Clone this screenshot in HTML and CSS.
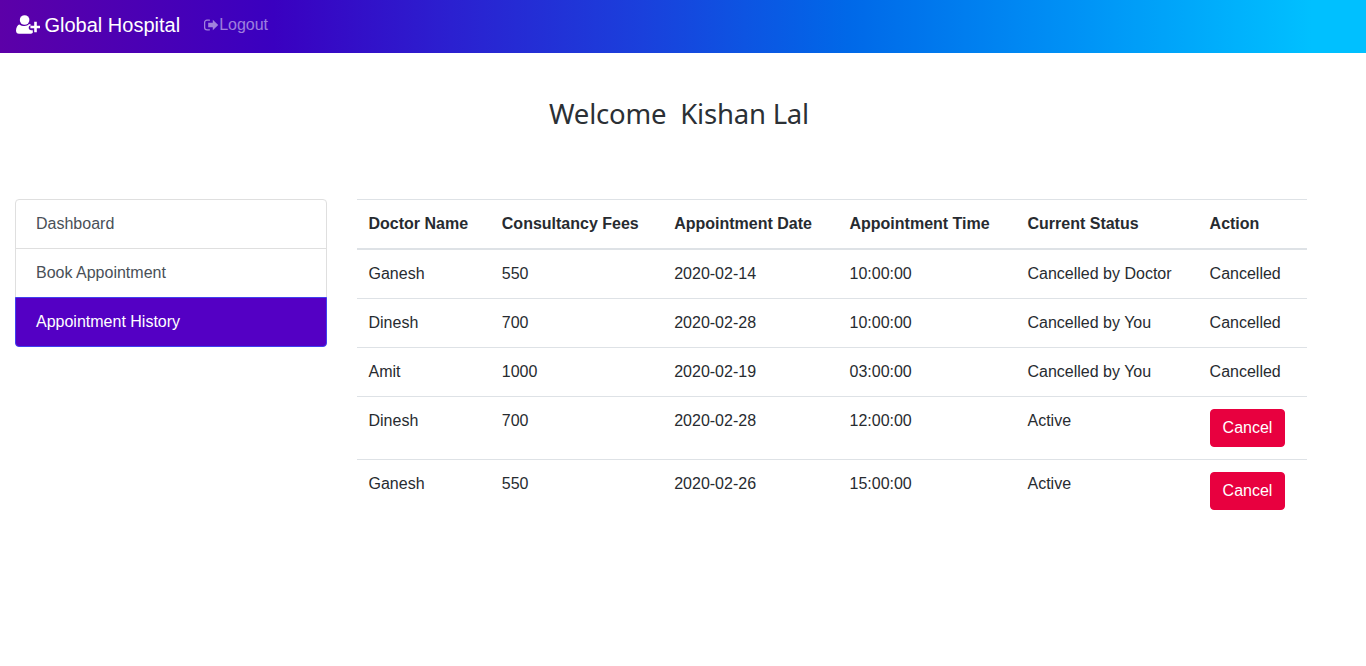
FILE: index.html
```html
<!DOCTYPE html>
<html lang="en">
<head>
<meta charset="utf-8">
<title>Global Hospital</title>
<link rel="stylesheet" href="styles.css">
</head>
<body>
<nav class="navbar">
  <a class="brand" href="#">
    <svg class="brand-icon" viewBox="0 0 24 19" width="24" height="19" aria-hidden="true">
      <circle cx="8.6" cy="5" r="4.8"/>
      <path d="M3.8 9.2C1.4 10 .2 12.2 0 15.4c0 2 1 3.3 3 3.3h11.6c.9 0 1.7-.3 2.2-.9v-2.6h-1.6c-1.5 0-2.5-1-2.5-2.5s1-2.5 2.5-2.5h.4c-.6-.5-1.4-.9-2.4-1.1-1.3 1.3-2.9 2-4.6 2s-4.3-.7-5.8-1.9z"/>
      <path d="M18.2 6.8h2.6v3.9H24.6v2.6h-3.8v3.9h-2.6v-3.9h-3.8v-2.6h3.8z"/>
    </svg>
    Global Hospital
  </a>
  <a class="logout" href="#">
    <svg class="logout-icon" viewBox="0 0 15 12" width="15" height="12" aria-hidden="true">
      <path d="M5.4 1.2H3C1.6 1.2.6 2.2.6 3.6v4.8c0 1.4 1 2.4 2.4 2.4h2.4" fill="none" stroke="currentColor" stroke-width="1.3" stroke-linecap="round"/>
      <path d="M8.8.8l5.4 5.2-5.4 5.2V8.2H4.2V3.8h4.6z"/>
    </svg>Logout
  </a>
</nav>
<main class="page">
  <h3 class="welcome">Welcome &nbsp;Kishan Lal</h3>
  <div class="content">
    <aside class="side">
      <a class="side-item" href="#">Dashboard</a>
      <a class="side-item" href="#">Book Appointment</a>
      <a class="side-item active" href="#">Appointment History</a>
    </aside>
    <table class="table">
      <thead>
        <tr>
          <th class="col-doctor">Doctor Name</th>
          <th class="col-fees">Consultancy Fees</th>
          <th class="col-date">Appointment Date</th>
          <th class="col-time">Appointment Time</th>
          <th class="col-status">Current Status</th>
          <th class="col-action">Action</th>
        </tr>
      </thead>
      <tbody>
        <tr><td>Ganesh</td><td>550</td><td>2020-02-14</td><td>10:00:00</td><td>Cancelled by Doctor</td><td>Cancelled</td></tr>
        <tr><td>Dinesh</td><td>700</td><td>2020-02-28</td><td>10:00:00</td><td>Cancelled by You</td><td>Cancelled</td></tr>
        <tr><td>Amit</td><td>1000</td><td>2020-02-19</td><td>03:00:00</td><td>Cancelled by You</td><td>Cancelled</td></tr>
        <tr><td>Dinesh</td><td>700</td><td>2020-02-28</td><td>12:00:00</td><td>Active</td><td><button class="btn" type="button">Cancel</button></td></tr>
        <tr><td>Ganesh</td><td>550</td><td>2020-02-26</td><td>15:00:00</td><td>Active</td><td><button class="btn" type="button">Cancel</button></td></tr>
      </tbody>
    </table>
  </div>
</main>
</body>
</html>
```
FILE: styles.css
```css
* { box-sizing: border-box; }
html, body { margin: 0; height: 100%; }
body {
  font-family: "Liberation Sans", Arial, sans-serif;
  font-size: 16px;
  line-height: 24px;
  color: #272b30;
  background: #fff;
}
a { text-decoration: none; }
.navbar {
  height: 53px;
  display: flex;
  align-items: center;
  padding: 0 16px 4px;
  background: linear-gradient(to right, #5c00a8 0%, #3a00c0 20%, #2b20d0 33%, #1a40dc 47%, #0068e8 62%, #0090f5 78%, #00c0ff 96%);
}
.brand {
  display: flex;
  align-items: center;
  gap: 5px;
  color: #fff;
  font-size: 20px;
  line-height: 30px;
  margin-right: 24px;
}
.brand-icon { fill: #fff; margin-right: -.5px; }
.logout {
  display: flex;
  align-items: center;
  color: rgba(255, 255, 255, .5);
}
.logout-icon { fill: currentColor; }
.page { padding: 0 15px; }
.welcome {
  margin: 0;
  padding: 42px 8px 0 0;
  height: 146px;
  text-align: center;
  font-family: "Noto Sans", sans-serif;
  font-weight: 400;
  font-size: 27.5px;
  letter-spacing: -.2px;
  line-height: 38px;
  color: #2b3035;
}
.content {
  display: flex;
  align-items: flex-start;
  gap: 30px;
}
.side {
  width: 311.5px;
  flex: none;
  display: flex;
  flex-direction: column;
  border-radius: 4px;
}
.side-item {
  height: 50px;
  margin-top: -1px;
  padding: 12px 20px;
  border: 1px solid #dfdfdf;
  color: #495057;
}
.side-item:first-child { margin-top: 0; border-radius: 4px 4px 0 0; }
.side-item:last-child { border-radius: 0 0 4px 4px; }
.side-item.active {
  background: #5400c4;
  border-color: #4040f0;
  color: #fff;
}
.table {
  width: 950px;
  table-layout: fixed;
  border-collapse: collapse;
}
.col-doctor { width: 133.3px; }
.col-fees { width: 172.4px; }
.col-date { width: 175.3px; }
.col-time { width: 178px; }
.col-status { width: 182.1px; }
.col-action { width: 108.9px; }
.table th, .table td {
  padding: 12px;
  text-align: left;
  vertical-align: top;
  border-top: 1px solid #dee2e6;
}
.table th { font-weight: 700; }
.table thead th { border-bottom: 2px solid #dee2e6; }
.btn {
  display: block;
  height: 38px;
  padding: 6px 12px;
  font: inherit;
  color: #fff;
  background: #e8003f;
  border: 1px solid #e8003f;
  border-radius: 4px;
}
```
